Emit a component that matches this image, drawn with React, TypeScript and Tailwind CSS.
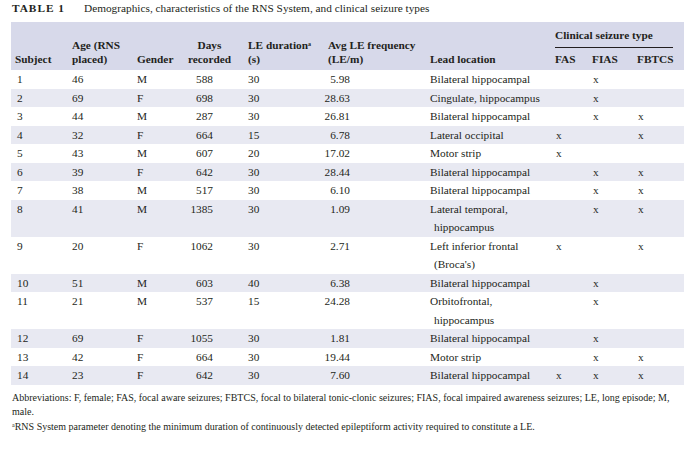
type Row = {
  id: number;
  age: number;
  gender: "M" | "F";
  days: number;
  dur: number;
  freq: string;
  lead: string[];
  fas?: boolean;
  fias?: boolean;
  fbtcs?: boolean;
};

const rows: Row[] = [
  { id: 1, age: 46, gender: "M", days: 588, dur: 30, freq: "5.98", lead: ["Bilateral hippocampal"], fias: true },
  { id: 2, age: 69, gender: "F", days: 698, dur: 30, freq: "28.63", lead: ["Cingulate, hippocampus"], fias: true },
  { id: 3, age: 44, gender: "M", days: 287, dur: 30, freq: "26.81", lead: ["Bilateral hippocampal"], fias: true, fbtcs: true },
  { id: 4, age: 32, gender: "F", days: 664, dur: 15, freq: "6.78", lead: ["Lateral occipital"], fas: true, fbtcs: true },
  { id: 5, age: 43, gender: "M", days: 607, dur: 20, freq: "17.02", lead: ["Motor strip"], fas: true },
  { id: 6, age: 39, gender: "F", days: 642, dur: 30, freq: "28.44", lead: ["Bilateral hippocampal"], fias: true, fbtcs: true },
  { id: 7, age: 38, gender: "M", days: 517, dur: 30, freq: "6.10", lead: ["Bilateral hippocampal"], fias: true, fbtcs: true },
  { id: 8, age: 41, gender: "M", days: 1385, dur: 30, freq: "1.09", lead: ["Lateral temporal,", "hippocampus"], fias: true, fbtcs: true },
  { id: 9, age: 20, gender: "F", days: 1062, dur: 30, freq: "2.71", lead: ["Left inferior frontal", "(Broca's)"], fas: true, fbtcs: true },
  { id: 10, age: 51, gender: "M", days: 603, dur: 40, freq: "6.38", lead: ["Bilateral hippocampal"], fias: true },
  { id: 11, age: 21, gender: "M", days: 537, dur: 15, freq: "24.28", lead: ["Orbitofrontal,", "hippocampus"], fias: true },
  { id: 12, age: 69, gender: "F", days: 1055, dur: 30, freq: "1.81", lead: ["Bilateral hippocampal"], fias: true },
  { id: 13, age: 42, gender: "F", days: 664, dur: 30, freq: "19.44", lead: ["Motor strip"], fias: true, fbtcs: true },
  { id: 14, age: 23, gender: "F", days: 642, dur: 30, freq: "7.60", lead: ["Bilateral hippocampal"], fas: true, fias: true, fbtcs: true },
];

const cols = "grid grid-cols-[57px_65px_50px_61px_80px_102px_125px_37px_45px_50px]";

export default function App() {
  return (
    <div
      className="h-[460px] w-[695px] bg-white px-[11px] pt-px text-[#231f20]"
      style={{ fontFamily: '"Liberation Serif", "Times New Roman", serif' }}
    >
      {/* Caption */}
      <div className="flex h-[14px] items-center pl-px text-[11.3px] leading-[14px]">
        <span className="w-[72px] font-bold tracking-[1px]">TABLE 1</span>
        <span>Demographics, characteristics of the RNS System, and clinical seizure types</span>
      </div>

      <div className="mt-[7px] text-[11.3px]">
        {/* Header band */}
        <div className={`${cols} h-[48px] items-end bg-[#d7d9ea] font-bold leading-[14px]`}>
          <div className="pb-[4px] pl-[4px]">Subject</div>
          <div className="pb-[4px] pl-[4px]">
            Age (RNS
            <br />
            placed)
          </div>
          <div className="pb-[4px] pl-[4px]">Gender</div>
          <div className="pb-[4px] pl-[4px] pr-[12px] text-center">
            Days
            <br />
            recorded
          </div>
          <div className="pb-[4px] pl-[4px]">
            LE duration<sup className="text-[6px]">a</sup>
            <br />
            (s)
          </div>
          <div className="whitespace-nowrap pb-[4px] pl-[4px]">
            Avg LE frequency
            <br />
            (LE/m)
          </div>
          <div className="pb-[4px] pl-[4px]">Lead location</div>
          <div className="col-span-3 flex flex-col pb-[4px]">
            <div className="pl-[4px]">Clinical seizure type</div>
            <div className="ml-[4px] mr-[10px] mt-[5px] border-t border-[#231f20]" />
            <div className="mt-[4px] grid grid-cols-[37px_45px_50px]">
              <div className="pl-[4px]">FAS</div>
              <div className="pl-[4px]">FIAS</div>
              <div className="pl-[4px]">FBTCS</div>
            </div>
          </div>
        </div>

        {/* Body rows */}
        {rows.map((r) => (
          <div
            key={r.id}
            className={`${cols} items-start leading-[18.5px] ${r.id % 2 === 0 ? "bg-[#e8e9f2]" : ""}`}
          >
            <div className="pl-[6px]">{r.id}</div>
            <div className="pl-[4px]">{r.age}</div>
            <div className="pl-[4px]">{r.gender}</div>
            <div className="pr-[31px] text-right">{r.days}</div>
            <div className="pl-[4px]">{r.dur}</div>
            <div className="pr-[76px] text-right">{r.freq}</div>
            <div className="pl-[4px]">
              {r.lead.map((line, i) => (
                <div key={line} className={i > 0 ? "pl-[4px]" : ""}>
                  {line}
                </div>
              ))}
            </div>
            <div className="pl-[5px]">{r.fas ? "x" : ""}</div>
            <div className="pl-[5px]">{r.fias ? "x" : ""}</div>
            <div className="pl-[5px]">{r.fbtcs ? "x" : ""}</div>
          </div>
        ))}
      </div>

      {/* Footnotes */}
      <div className="mt-[6px] pl-px text-[10px] leading-[14px]">
        <p>
          Abbreviations: F, female; FAS, focal aware seizures; FBTCS, focal to bilateral tonic-clonic seizures;
          FIAS, focal impaired awareness seizures; LE, long episode; M,
          <br />
          male.
        </p>
        <p className="mt-[1px]">
          <sup className="text-[6px]">a</sup>RNS System parameter denoting the minimum duration of continuously
          detected epileptiform activity required to constitute a LE.
        </p>
      </div>
    </div>
  );
}
